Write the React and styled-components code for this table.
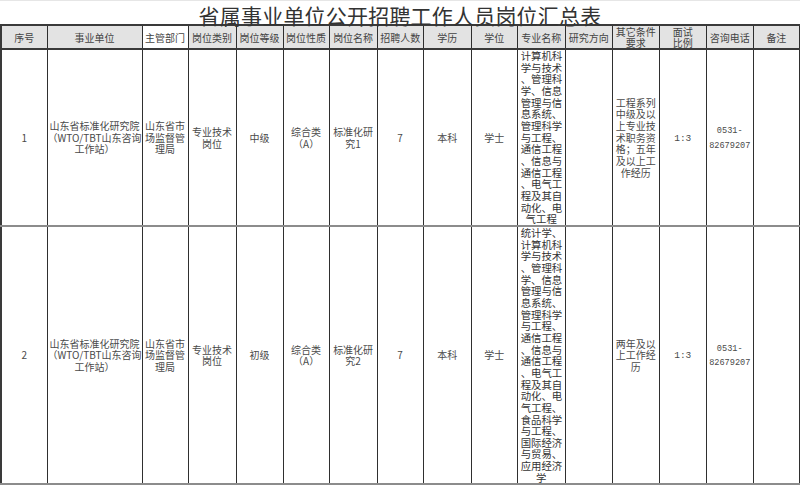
import React from 'react';
import styled, { createGlobalStyle } from 'styled-components';

const GlobalStyle = createGlobalStyle`
  html, body {
    margin: 0;
    padding: 0;
    background: #ffffff;
  }
  body {
    font-family: "Noto Sans CJK SC", "Noto Sans", sans-serif;
  }
`;

const Page = styled.div`
  width: 800px;
  height: 485px;
  overflow: hidden;
  background: #ffffff;
`;

const Title = styled.div`
  height: 24px;
  line-height: 28px;
  text-align: center;
  font-size: 21px;
  font-weight: 400;
  color: #333;
  letter-spacing: 0.2px;
  border-top: 1px solid #e6e6e6;
  box-sizing: border-box;
  overflow: visible;
`;

const Table = styled.table`
  width: 800px;
  table-layout: fixed;
  border-collapse: collapse;
  border-top: 2px solid #3a3a3a;
  border-left: 2px solid #3a3a3a;
`;

const HeadRow = styled.tr`
  height: 22px;
`;

const Row = styled.tr`
  height: ${({ h }) => h}px;
  border-bottom: 2px solid #8c8c8c;
`;

const Th = styled.th`
  padding: 0;
  font-size: 10px;
  line-height: 11px;
  font-weight: 400;
  color: #444;
  background: ${({ white }) => (white ? '#ffffff' : '#e3e3e3')};
  border-right: 1px solid #2f2f2f;
  border-bottom: 2px solid #3a3a3a;
  text-align: center;
  vertical-align: middle;
  overflow: hidden;
  white-space: pre-line;
`;

const Td = styled.td`
  padding: 0;
  font-size: ${({ fs }) => fs || 10}px;
  line-height: 11.7px;
  color: #4a4a4a;
  border-right: 1px solid #2f2f2f;
  text-align: center;
  vertical-align: middle;
  white-space: pre-line;
  overflow: hidden;
`;

const MajorTd = styled(Td)`
  padding: 0 0 0 3px;
  font-size: 10.4px;
  line-height: 11.65px;
  text-align: left;
  color: #333;
  vertical-align: top;
`;

const Line = styled.div`
  white-space: nowrap;
  text-align: ${({ center }) => (center ? 'center' : 'left')};
  padding-right: ${({ center }) => (center ? 3 : 0)}px;
`;

const Mono = styled.span`
  font-family: "Liberation Mono", "DejaVu Sans Mono", monospace;
  font-size: ${({ fs }) => fs || 9}px;
`;

const widths = [46, 95, 46, 48, 47, 46, 48, 46, 48, 46, 48, 47, 47, 47, 47, 46];

const headers = [
  '序号', '事业单位', '主管部门', '岗位类别', '岗位等级', '岗位性质', '岗位名称',
  '招聘人数', '学历', '学位', '专业名称', '研究方向', '其它条件\n要求', '面试\n比例',
  '咨询电话', '备注',
];

const major1 = [
  '计算机科', '学与技术', '、管理科', '学、信息', '管理与信', '息系统、', '管理科学',
  '与工程、', '通信工程', '、信息与', '通信工程', '、电气工', '程及其自', '动化、电',
];

const major2 = [
  '统计学、', '计算机科', '学与技术', '、管理科', '学、信息', '管理与信', '息系统、',
  '管理科学', '与工程、', '通信工程', '、信息与', '通信工程', '、电气工', '程及其自',
  '动化、电', '气工程、', '食品科学', '与工程、', '国际经济', '与贸易、', '应用经济',
];

const rows = [
  {
    h: 177,
    no: '1',
    level: '中级',
    name: '标准化研\n究1',
    major: major1,
    majorLast: '气工程',
    other: '工程系列\n中级及以\n上专业技\n术职务资\n格；五年\n及以上工\n作经历',
  },
  {
    h: 257,
    no: '2',
    level: '初级',
    name: '标准化研\n究2',
    major: major2,
    majorLast: '学',
    other: '两年及以\n上工作经\n历',
  },
];

const App = () => (
  <Page>
    <GlobalStyle />
    <Title>省属事业单位公开招聘工作人员岗位汇总表</Title>
    <Table>
      <colgroup>
        {widths.map((w, i) => (
          <col key={i} style={{ width: w }} />
        ))}
      </colgroup>
      <thead>
        <HeadRow>
          {headers.map((t, i) => (
            <Th key={i} white={i === 2}>
              {t}
            </Th>
          ))}
        </HeadRow>
      </thead>
      <tbody>
        {rows.map((r) => (
          <Row key={r.no} h={r.h}>
            <Td>{r.no}</Td>
            <Td>{'山东省标准化研究院\n（WTO/TBT山东咨询\n工作站）'}</Td>
            <Td>{'山东省市\n场监督管\n理局'}</Td>
            <Td>{'专业技术\n岗位'}</Td>
            <Td>{r.level}</Td>
            <Td>{'综合类\n（A）'}</Td>
            <Td>{r.name}</Td>
            <Td>7</Td>
            <Td>本科</Td>
            <Td>学士</Td>
            <MajorTd>
              {r.major.map((l, i) => (
                <Line key={i}>{l}</Line>
              ))}
              <Line center>{r.majorLast}</Line>
            </MajorTd>
            <Td />
            <Td>{r.other}</Td>
            <Td><Mono fs={9.5}>1:3</Mono></Td>
            <Td>
              <Mono fs={8.6}>{'0531-\n82679207'}</Mono>
            </Td>
            <Td />
          </Row>
        ))}
      </tbody>
    </Table>
  </Page>
);

export default App;
